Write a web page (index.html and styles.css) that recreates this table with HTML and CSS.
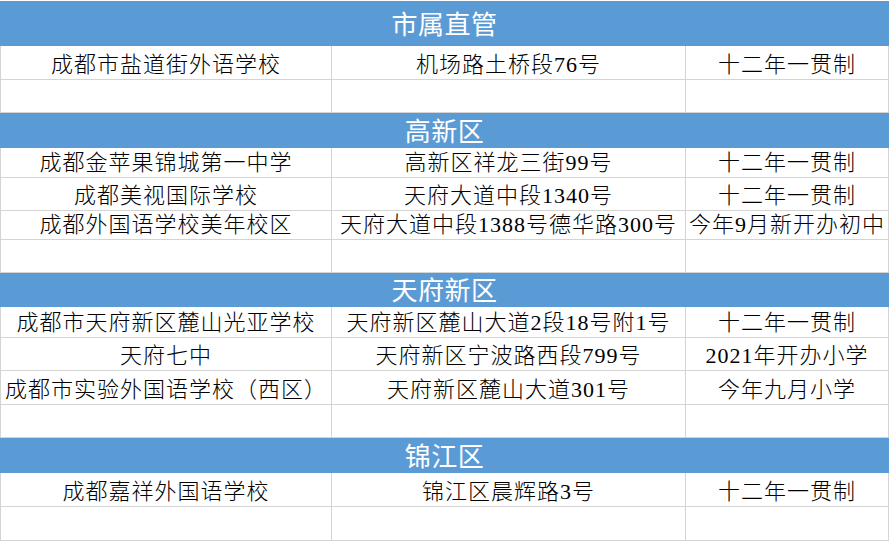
FILE: index.html
```html
<!DOCTYPE html>
<html lang="zh-CN">
<head>
<meta charset="utf-8">
<title>学校列表</title>
<link rel="stylesheet" href="styles.css">
</head>
<body>
<div class="sheet">
  <div class="band h45">市属直管</div>
  <div class="row h34"><div class="cell">成都市盐道街外语学校</div><div class="cell">机场路土桥段76号</div><div class="cell">十二年一贯制</div></div>
  <div class="row h33"><div class="cell"></div><div class="cell"></div><div class="cell"></div></div>

  <div class="band h35">高新区</div>
  <div class="row h30"><div class="cell">成都金苹果锦城第一中学</div><div class="cell">高新区祥龙三街99号</div><div class="cell">十二年一贯制</div></div>
  <div class="row h33"><div class="cell">成都美视国际学校</div><div class="cell">天府大道中段1340号</div><div class="cell">十二年一贯制</div></div>
  <div class="row h29"><div class="cell">成都外国语学校美年校区</div><div class="cell">天府大道中段1388号德华路300号</div><div class="cell">今年9月新开办初中</div></div>
  <div class="row h33"><div class="cell"></div><div class="cell"></div><div class="cell"></div></div>

  <div class="band h34">天府新区</div>
  <div class="row h31"><div class="cell">成都市天府新区麓山光亚学校</div><div class="cell">天府新区麓山大道2段18号附1号</div><div class="cell">十二年一贯制</div></div>
  <div class="row h33"><div class="cell">天府七中</div><div class="cell">天府新区宁波路西段799号</div><div class="cell">2021年开办小学</div></div>
  <div class="row h34"><div class="cell">成都市实验外国语学校（西区）</div><div class="cell">天府新区麓山大道301号</div><div class="cell">今年九月小学</div></div>
  <div class="row h33"><div class="cell"></div><div class="cell"></div><div class="cell"></div></div>

  <div class="band h35">锦江区</div>
  <div class="row h34"><div class="cell">成都嘉祥外国语学校</div><div class="cell">锦江区晨辉路3号</div><div class="cell">十二年一贯制</div></div>
  <div class="row h34"><div class="cell"></div><div class="cell"></div><div class="cell"></div></div>
</div>
</body>
</html>
```
FILE: styles.css
```css
html, body {
  margin: 0;
  padding: 0;
  background: #ffffff;
}
body {
  width: 889px;
  height: 541px;
  overflow: hidden;
  font-family: "Liberation Serif", "Noto Sans CJK SC", serif;
}
.sheet {
  padding-top: 1px;
  display: flex;
  flex-direction: column;
}
.band {
  background: #5b9bd5;
  color: #ffffff;
  font-size: 26px;
  line-height: 1;
  display: flex;
  align-items: center;
  justify-content: center;
  padding-top: 4px;
  box-sizing: border-box;
  letter-spacing: 0.5px;
}
.row {
  display: grid;
  grid-template-columns: 332px 354px 203px;
  box-sizing: border-box;
}
.cell {
  border-right: 1px solid #d4d4d4;
  border-bottom: 1px solid #d4d4d4;
  display: flex;
  align-items: flex-end;
  justify-content: center;
  padding-bottom: 3px;
  font-size: 22px;
  font-weight: 300;
  line-height: 1;
  letter-spacing: 1px;
  color: #000000;
  white-space: nowrap;
  overflow: hidden;
  box-sizing: border-box;
}
.cell:first-child {
  border-left: 1px solid #d4d4d4;
}
.h29 { height: 29px; }
.h30 { height: 30px; }
.h31 { height: 31px; }
.h33 { height: 33px; }
.h34 { height: 34px; }
.h35 { height: 35px; }
.h45 { height: 45px; }
```
